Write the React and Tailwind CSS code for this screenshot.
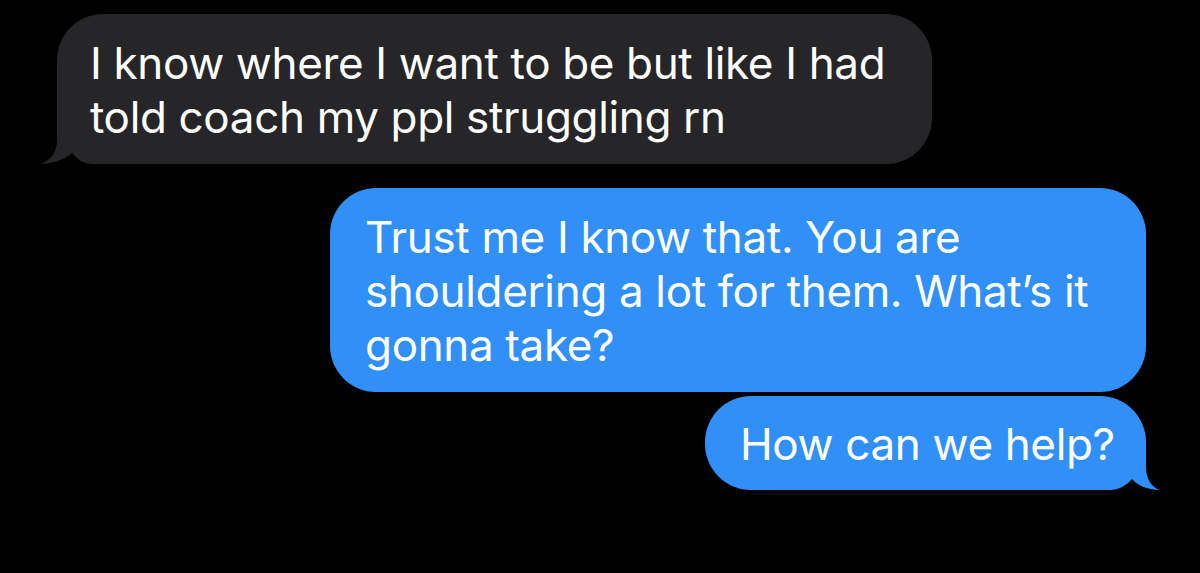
import React from "react";

const font = { fontFamily: "Inter, 'Noto Sans', sans-serif" };

function TailLeft() {
  return (
    <svg
      className="absolute left-[-17px] bottom-0 w-[60px] h-[50px]"
      viewBox="0 0 60 50"
      fill="#262629"
    >
      <path d="M17 0 V26 C17 39 10 47 0 50 C12 50 24 46 32 39 C38 46 44 50 52 50 H60 V0 Z" />
    </svg>
  );
}

function TailRight() {
  return (
    <svg
      className="absolute right-[-14px] bottom-0 w-[60px] h-[50px]"
      viewBox="0 0 60 50"
      fill="#3190f8"
    >
      <path d="M46 0 V26 C46 39 51 47 60 50 C49 50 38 46 32 39 C26 46 18 50 10 50 H0 V0 Z" />
    </svg>
  );
}

function Bubble({ lines, sent, tail, className }) {
  return (
    <div
      className={
        "relative rounded-[46px] text-white text-[44px] leading-[54px] tracking-[-0.35px] pt-[22px] pb-[20px] " +
        (sent ? "bg-[#3190f8] " : "bg-[#262629] ") +
        className
      }
      style={font}
    >
      {tail && (sent ? <TailRight /> : <TailLeft />)}
      {lines.map((l) => (
        <span key={l} className="relative block whitespace-nowrap">
          {l}
        </span>
      ))}
    </div>
  );
}

export default function App() {
  return (
    <div className="w-full h-[573px] bg-black flex flex-col overflow-hidden">
      <Bubble
        className="self-start ml-[57px] mt-[14px] w-[875px] pl-[33px]"
        tail
        lines={[
          "I know where I want to be but like I had",
          "told coach my ppl struggling rn",
        ]}
      />
      <Bubble
        sent
        className="self-end mr-[54px] mt-[24px] w-[816px] pl-[35px]"
        lines={[
          "Trust me I know that. You are",
          "shouldering a lot for them. What\u2019s it",
          "gonna take?",
        ]}
      />
      <Bubble
        sent
        tail
        className="self-end mr-[54px] mt-[4px] w-[441px] pl-[35px] !pt-[21px] !pb-[19px]"
        lines={["How can we help?"]}
      />
    </div>
  );
}
